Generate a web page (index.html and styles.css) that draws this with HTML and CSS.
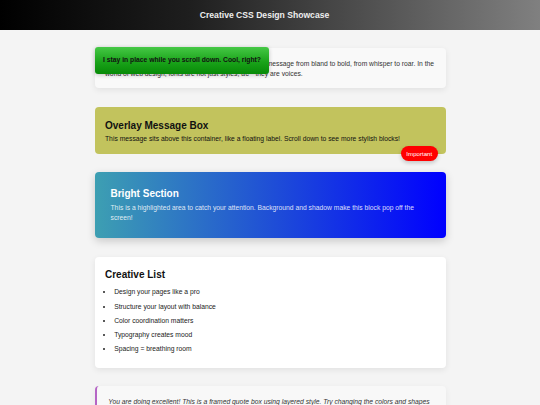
FILE: index.html
```html
<!DOCTYPE html>
<html lang="en">
<head>
<meta charset="utf-8">
<title>Creative CSS Design Showcase</title>
<link rel="stylesheet" href="styles.css">
</head>
<body>
<header class="header">
  <h1 class="title">Creative CSS Design Showcase</h1>
</header>
<main class="main">
  <section class="card intro">
    <div class="sticky">I stay in place while you scroll down. Cool, right?</div>
    <p>Fonts really matter. Good typography can transform a message from bland to bold, from whisper to roar. In the world of web design, fonts are not just styles, â€&emsp;they are voices.</p>
  </section>
  <section class="card overlay">
    <h2>Overlay Message Box</h2>
    <p>This message sits above this container, like a floating label. Scroll down to see more stylish blocks!</p>
    <span class="badge">Important</span>
  </section>
  <section class="card bright">
    <h2>Bright Section</h2>
    <p>This is a highlighted area to catch your attention. Background and shadow make this block pop off the screen!</p>
  </section>
  <section class="card list">
    <h2>Creative List</h2>
    <ul>
      <li>Design your pages like a pro</li>
      <li>Structure your layout with balance</li>
      <li>Color coordination matters</li>
      <li>Typography creates mood</li>
      <li>Spacing = breathing room</li>
    </ul>
  </section>
  <section class="card quote">
    <p>You are doing excellent! This is a framed quote box using layered style. Try changing the colors and shapes to see what happens next.</p>
  </section>
</main>
</body>
</html>
```
FILE: styles.css
```css
html, body {
  margin: 0;
  padding: 0;
}

body {
  font-family: "Liberation Sans", Arial, sans-serif;
  font-size: 6.75px;
  background: #f4f4f4;
  color: #333;
}

.header {
  height: 30px;
  display: flex;
  align-items: center;
  justify-content: center;
  padding-right: 11px;
  background: linear-gradient(90deg, #000 0%, #1e1e1e 35%, #808080 100%);
}

.title {
  margin: 0;
  font-size: 8.6px;
  font-weight: bold;
  color: #eeeeee;
}

.main {
  padding-top: 18px;
  display: flex;
  flex-direction: column;
  align-items: center;
  gap: 18.5px;
}

.card {
  width: 351px;
  box-sizing: border-box;
  border-radius: 4px;
}

.card p {
  margin: 0;
  line-height: 10.2px;
}

.card h2 {
  margin: 0;
  font-size: 10px;
  line-height: 11.5px;
  font-weight: bold;
}

.intro {
  position: relative;
  background: #f9f9f9;
  padding: 11px 10.5px 9px;
  box-shadow: 0 2px 6px rgba(0, 0, 0, 0.08);
}

.sticky {
  position: absolute;
  top: -1px;
  left: 0;
  padding: 8.4px 8.5px;
  line-height: 10.2px;
  font-weight: bold;
  color: #111;
  white-space: nowrap;
  background: linear-gradient(180deg, #46c846 0%, #1aa31a 55%, #078a07 100%);
  border-radius: 3px;
  box-shadow: 0 1px 4px rgba(0, 0, 0, 0.22);
}

.overlay {
  position: relative;
  background: #c2c35d;
  color: #111;
  padding: 13.25px 10.5px 9.5px;
}

.overlay h2 {
  margin-bottom: 2.35px;
}

.badge {
  position: absolute;
  right: 8px;
  bottom: -7px;
  background: #ff0000;
  color: #fff;
  font-size: 6.1px;
  line-height: 15px;
  padding: 0 5.4px;
  border-radius: 8px;
  box-shadow: 0 2px 4px rgba(0, 0, 0, 0.2);
}

.bright {
  background: linear-gradient(90deg, #3d9fb2 0%, #1f4fd6 50%, #0000ff 100%);
  color: #fff;
  padding: 16.25px 16px 15.3px;
  box-shadow: 0 3px 8px rgba(0, 0, 0, 0.18);
}

.bright p {
  margin-top: 2.95px;
  line-height: 10px;
  color: rgba(255, 255, 255, 0.85);
}

.list {
  background: #fff;
  color: #111;
  padding: 12.25px 10.5px 13.2px;
  box-shadow: 0 2px 6px rgba(0, 0, 0, 0.08);
}

.list ul {
  margin: 6.85px 0 0;
  padding-left: 9.2px;
  color: #222;
}

.list li {
  line-height: 10.2px;
  margin-bottom: 4.05px;
}

.list li:last-child {
  margin-bottom: 0;
}

.quote {
  background: #f8f8f8;
  border-left: 2.2px solid #b565c5;
  padding: 10.6px 12px 10px 11.8px;
  font-style: italic;
  box-shadow: 0 2px 6px rgba(0, 0, 0, 0.06);
}
```
